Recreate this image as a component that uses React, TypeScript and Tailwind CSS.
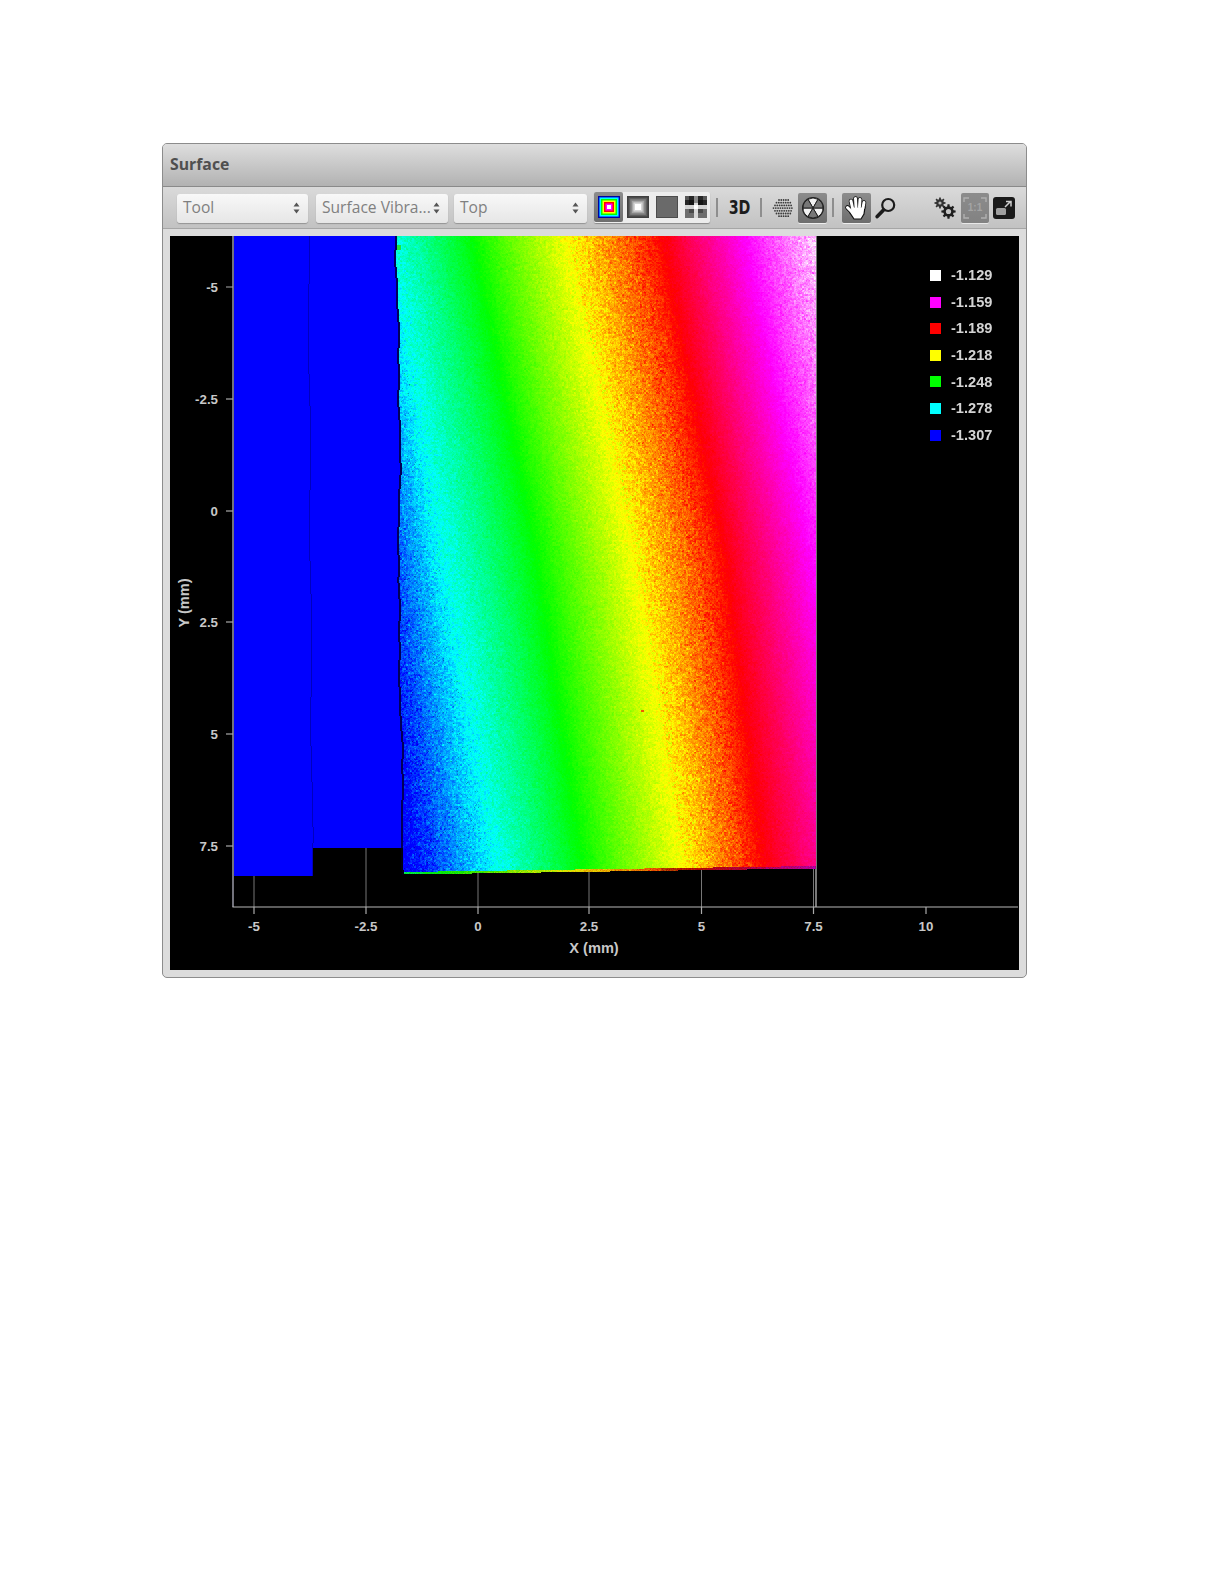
import React, { useEffect, useRef } from "react";

const OX = 170;
const OY = 237;
const PW = 849;
const PH = 734;

function leftEdge(y: number) {
  return (
    398 +
    ((y - 235) / 640) * 5 +
    Math.sin(y / 23) * 0.7 +
    Math.sin(y / 61 + 1) * 1.1 +
    Math.sin(y / 7.3) * 0.4
  );
}

const COLORS: [number, number, number][] = [
  [0, 0, 255],
  [0, 255, 255],
  [0, 255, 0],
  [255, 255, 0],
  [255, 0, 0],
  [255, 0, 255],
  [255, 255, 255],
];

const POS: [number, number, number][] = [
  [325, 375, 412],
  [385, 438, 492],
  [472, 535, 582],
  [568, 635, 685],
  [660, 722, 762],
  [745, 810, 862],
  [835, 900, 955],
];

function colorAt(u: number): [number, number, number] {
  if (u <= 0) return COLORS[0];
  if (u >= 6) return COLORS[6];
  const i = Math.floor(u);
  const f = u - i;
  const a = COLORS[i];
  const b = COLORS[i + 1];
  return [a[0] + (b[0] - a[0]) * f, a[1] + (b[1] - a[1]) * f, a[2] + (b[2] - a[2]) * f];
}

function sigmaAt(u: number) {
  if (u < 1) return 0.16 - u * 0.04;
  if (u < 2) return 0.12 - (u - 1) * 0.09;
  if (u < 3) return 0.03 + (u - 2) * 0.05;
  if (u < 3.7) return 0.14;
  if (u < 4) return 0.14 - (u - 3.7) * 0.3;
  if (u < 5) return 0.04;
  return 0.04 + (u - 5) * 0.16;
}

function Heatmap() {
  const ref = useRef<HTMLCanvasElement>(null);
  useEffect(() => {
    const c = ref.current;
    if (!c) return;
    const ctx = c.getContext("2d");
    if (!ctx) return;
    const img = ctx.createImageData(PW, PH);
    const d = img.data;
    let s = 12345;
    const rnd = () => {
      s = (s + 0x6d2b79f5) | 0;
      let t = Math.imul(s ^ (s >>> 15), 1 | s);
      t = (t + Math.imul(t ^ (t >>> 7), 61 | t)) ^ t;
      return ((t ^ (t >>> 14)) >>> 0) / 4294967296;
    };
    const gauss = () => (rnd() + rnd() + rnd() + rnd() - 2) * 1.7;
    const coarse = new Float32Array(PW * PH);
    for (let i = 0; i < coarse.length; i++) coarse[i] = gauss();
    const put = (x: number, y: number, r: number, g: number, b: number) => {
      const px = x - OX;
      const py = y - OY;
      if (px < 0 || py < 0 || px >= PW || py >= PH) return;
      const i = (py * PW + px) * 4;
      d[i] = r;
      d[i + 1] = g;
      d[i + 2] = b;
      d[i + 3] = 255;
    };
    const uAt = (x: number, p: number) => {
      const row = POS.map((q) =>
        p < 0.5 ? q[0] + (q[1] - q[0]) * (p / 0.5) : q[1] + (q[2] - q[1]) * ((p - 0.5) / 0.5),
      );
      if (x <= row[0]) return (x - row[0]) / 60;
      for (let i = 1; i < row.length; i++) {
        if (x <= row[i]) return i - 1 + (x - row[i - 1]) / (row[i] - row[i - 1]);
      }
      return 6;
    };
    for (let y = OY; y < 880; y++) {
      const le = Math.round(leftEdge(y));
      const seam = Math.round(308 + ((y - 235) / 640) * 4 + Math.sin(y / 31) * 0.8);
      const p = (y - 237) / 633;
      for (let x = 234; x < 816; x++) {
        if (x < le - 2) {
          const slab1 = x < 313;
          const bottom = slab1 ? 877 - (x - 233) * 0.012 : 848;
          if (y > bottom) continue;
          if (x === seam) put(x, y, 0, 0, 190);
          else put(x, y, 0, 0, 255);
        } else if (x < le) {
          if (y < 849 || y > 875) {
            if (y < 849) put(x, y, 0, 0, 90);
            continue;
          }
          put(x, y, 0, 0, 20);
        } else {
          const bot = 875 - ((x - 403) * 6) / 412;
          if (y > bot) continue;
          if (bot - y < 2.5) {
            const u = 1.7 + (x - 403) * 0.0077 + gauss() * 0.12;
            const [r, g, b] = colorAt(u);
            const k = x > 660 ? 0.7 : 0.9;
            put(x, y, r * k, g * k, b * k);
            continue;
          }
          const u0 = uAt(x, p);
          const ix = x - OX;
          const iy = y - OY;
          const n = gauss() * 0.55 + coarse[(iy >> 1) * PW + (ix >> 1)] * 0.75;
          const u = u0 + n * sigmaAt(u0);
          let [r, g, b] = colorAt(u);
          if (u0 < 1 && rnd() < 0.05) {
            const m = rnd() * 0.3;
            r *= 1 - m;
            g *= 1 - m;
            b *= 1 - m;
          }
          put(x, y, r, g, b);
        }
      }
    }
    for (let y = 246; y < 251; y++) for (let x = 397; x < 401; x++) put(x, y, 30, 230, 60);
    for (let y = 711; y < 713; y++) for (let x = 641; x < 644; x++) put(x, y, 240, 90, 0);
    ctx.putImageData(img, 0, 0);
  }, []);
  return <canvas ref={ref} width={PW} height={PH} className="absolute left-0 top-0 blur-[0.35px]" />;
}

const XTICKS: [number, string][] = [
  [254, "-5"],
  [366, "-2.5"],
  [478, "0"],
  [589, "2.5"],
  [701.5, "5"],
  [813.5, "7.5"],
  [926, "10"],
];
const YTICKS: [number, string][] = [
  [288, "-5"],
  [400, "-2.5"],
  [512, "0"],
  [623, "2.5"],
  [735, "5"],
  [847, "7.5"],
];

function Axes() {
  const font = { fontFamily: "'Liberation Sans', Arial, sans-serif", fontWeight: 700, fontSize: 13.3 };
  const big = { ...font, fontSize: 14.6 };
  return (
    <svg width={PW} height={PH} className="absolute left-0 top-0">
      <g transform={`translate(${-OX},${-OY})`}>
        {XTICKS.filter((t) => t[0] < 900).map(([x]) => (
          <line key={x} x1={x} x2={x} y1={237} y2={908} stroke="#777" strokeWidth={1} />
        ))}
        <line x1={816} x2={816} y1={237} y2={908} stroke="#c8c8c8" strokeWidth={1.2} />
        <line x1={233} x2={233} y1={237} y2={908} stroke="#c0c0d0" strokeWidth={1.2} />
        <line x1={232.5} x2={1018} y1={908} y2={908} stroke="#b8b8b8" strokeWidth={1.2} />
        {XTICKS.map(([x, l]) => (
          <g key={l}>
            <line x1={x} x2={x} y1={908} y2={915} stroke="#aaa" strokeWidth={1.2} />
            <text x={x} y={931.5} textAnchor="middle" fill="#c8c8c8" style={font}>
              {l}
            </text>
          </g>
        ))}
        {YTICKS.map(([y, l]) => (
          <g key={l}>
            <line x1={226} x2={233} y1={y} y2={y} stroke="#aaa" strokeWidth={1.2} />
            <text x={218} y={y + 4.5} textAnchor="end" fill="#c8c8c8" style={font}>
              {l}
            </text>
          </g>
        ))}
        <text x={594} y={954} textAnchor="middle" fill="#c8c8c8" style={big}>
          X (mm)
        </text>
        <text
          transform="translate(189,604) rotate(-90)"
          textAnchor="middle"
          fill="#c8c8c8"
          style={big}
        >
          Y (mm)
        </text>
      </g>
    </svg>
  );
}

const LEGEND = [
  ["-1.129", "bg-[#ffffff]"],
  ["-1.159", "bg-[#ff00ff]"],
  ["-1.189", "bg-[#ff0000]"],
  ["-1.218", "bg-[#ffff00]"],
  ["-1.248", "bg-[#00ff00]"],
  ["-1.278", "bg-[#00ffff]"],
  ["-1.307", "bg-[#0000ff]"],
];

function Legend() {
  return (
    <div className="absolute left-[760px] top-[34px] flex flex-col gap-[15.6px]">
      {LEGEND.map(([t, c]) => (
        <div key={t} className="flex h-[11px] items-center gap-[10px]">
          <span className={`h-[11px] w-[11px] ${c}`} />
          <span className="font-['Liberation_Sans',Arial,sans-serif] text-[14.6px] font-bold leading-none text-[#d4d4d4]">
            {t}
          </span>
        </div>
      ))}
    </div>
  );
}

function Select({ label, w, className }: { label: string; w: string; className: string }) {
  return (
    <div
      className={`mt-[1px] flex h-[29px] items-center justify-between rounded-[3px] bg-gradient-to-b from-[#f8f8f8] to-[#e6e6e6] pl-[6px] pr-[8px] shadow-[0_1px_1px_rgba(0,0,0,0.25)] ${w} ${className}`}
    >
      <span className="whitespace-nowrap font-['Open_Sans',sans-serif] text-[15.6px] leading-none text-[#808080]">
        {label}
      </span>
      <svg width="7" height="12" viewBox="0 0 7 12" className="shrink-0">
        <path d="M3.5 0.5 L6.5 4.5 H0.5 Z M3.5 11.5 L0.5 7.5 H6.5 Z" fill="#555" />
      </svg>
    </div>
  );
}

function Separator({ className }: { className: string }) {
  return <div className={`h-[19px] w-[2px] bg-[#8e8e8e] ${className}`} />;
}

function ActiveBtn({ children, className = "" }: { children: React.ReactNode; className?: string }) {
  return (
    <div
      className={`flex h-[30px] w-[29px] items-center justify-center rounded-[2px] bg-gradient-to-b from-[#8c8c8c] to-[#6e6e6e] shadow-[0_1px_0_#eeeeee] ${className}`}
    >
      {children}
    </div>
  );
}

function RainbowIcon() {
  const cols = ["#0000ff", "#00ffff", "#00ff00", "#ffff00", "#ff0000", "#ff00ff", "#ffffff"];
  return (
    <svg width="22" height="22" viewBox="0 0 22 22">
      {cols.map((c, i) => (
        <rect key={c} x={i * 1.5} y={i * 1.5} width={22 - i * 3} height={22 - i * 3} fill={c} />
      ))}
      <rect x="0.5" y="0.5" width="21" height="21" fill="none" stroke="#0000a0" />
    </svg>
  );
}

function GrayIcon() {
  const cols = ["#3f3f3f", "#5e5e5e", "#808080", "#a6a6a6", "#d6d6d6", "#ffffff"];
  return (
    <svg width="22" height="22" viewBox="0 0 22 22">
      {cols.map((c, i) => (
        <rect key={c} x={i * 1.6} y={i * 1.6} width={22 - i * 3.2} height={22 - i * 3.2} fill={c} />
      ))}
    </svg>
  );
}

function FlatIcon() {
  return (
    <svg width="22" height="22" viewBox="0 0 22 22">
      <rect x="0.5" y="0.5" width="21" height="21" fill="#6a6a6a" stroke="#4c4c4c" />
    </svg>
  );
}

function GridIcon() {
  return (
    <svg width="22" height="22" viewBox="0 0 22 22">
      <rect width="22" height="22" fill="#d8d8d8" />
      <rect x="0" y="0" width="9" height="9" fill="#262626" />
      <rect x="13" y="0" width="9" height="9" fill="#262626" />
      <rect x="0" y="13" width="9" height="9" fill="#6e6e6e" />
      <rect x="13" y="13" width="9" height="9" fill="#6e6e6e" />
      <rect x="0" y="0" width="4" height="4" fill="#555" />
      <rect x="18" y="0" width="4" height="4" fill="#555" />
      <rect x="4" y="4" width="5" height="5" fill="#141414" />
      <rect x="13" y="4" width="5" height="5" fill="#141414" />
      <rect x="4" y="13" width="5" height="4" fill="#4a4a4a" />
      <rect x="13" y="13" width="5" height="4" fill="#4a4a4a" />
      <rect x="9" y="0" width="4" height="7" fill="#8a8a8a" />
      <rect x="0" y="9" width="22" height="4" fill="#cfcfcf" opacity="0.7" />
      <rect x="9" y="9" width="4" height="4" fill="#fff" />
    </svg>
  );
}

function DotsIcon() {
  const rows = [
    [7, 5],
    [4.5, 7],
    [3, 8],
    [1.5, 9],
    [3, 8],
    [4.5, 7],
    [7, 5],
  ];
  return (
    <svg width="22" height="22" viewBox="0 0 22 22">
      {rows.map(([sx, n], r) =>
        Array.from({ length: n }).map((_, i) => (
          <circle key={`${r}-${i}`} cx={sx + i * 2.3} cy={3 + r * 2.7} r={0.9} fill="#3a3a3a" />
        )),
      )}
    </svg>
  );
}

function WheelIcon() {
  const sector = (a: number) => {
    const r = 10;
    const a0 = (a * Math.PI) / 180;
    const a1 = ((a + 60) * Math.PI) / 180;
    return `M12 12 L${12 + r * Math.cos(a0)} ${12 + r * Math.sin(a0)} A${r} ${r} 0 0 1 ${12 + r * Math.cos(a1)} ${12 + r * Math.sin(a1)} Z`;
  };
  return (
    <svg width="24" height="24" viewBox="0 0 24 24">
      <circle cx="12" cy="12" r="11" fill="#222" />
      {[-120, 0, 120].map((a) => (
        <path key={a} d={sector(a)} fill="#f2f2f2" stroke="#222" strokeWidth="1" />
      ))}
      {[-60, 60, 180].map((a) => (
        <path key={a} d={sector(a)} fill="#777" stroke="#222" strokeWidth="1" />
      ))}
    </svg>
  );
}

function HandIcon() {
  const fingers = ["M7.5 13 L6 6", "M11 12 L10.5 3.5", "M14.5 12 L15 4.5", "M18 13 L19 7.5"];
  return (
    <svg width="26" height="26" viewBox="0 0 24 26">
      <g strokeLinecap="round" fill="none">
        {fingers.map((d) => (
          <path key={d} d={d} stroke="#111" strokeWidth="4.6" />
        ))}
        <path d="M7 17 L2.5 12.5" stroke="#111" strokeWidth="4.6" />
      </g>
      <path d="M6 12 H20 L19 19 L16 24 H9 L5 18 Z" fill="#fff" stroke="#111" strokeWidth="1.2" />
      <g strokeLinecap="round" fill="none" stroke="#fff" strokeWidth="3">
        {fingers.map((d) => (
          <path key={d} d={d} />
        ))}
        <path d="M7 17 L2.5 12.5" />
      </g>
    </svg>
  );
}

function MagnifierIcon({ className }: { className: string }) {
  return (
    <svg width="21" height="22" viewBox="0 0 21 22" className={className}>
      <circle cx="13.2" cy="8" r="6" fill="none" stroke="#1c1c1c" strokeWidth="2.2" />
      <path d="M8.5 13 L2.2 19.6" stroke="#1c1c1c" strokeWidth="3.6" strokeLinecap="round" />
    </svg>
  );
}

function gearPath(cx: number, cy: number, ro: number, ri: number, n: number) {
  const pts: string[] = [];
  for (let i = 0; i < n; i++) {
    const step = (Math.PI * 2) / n;
    const a = i * step;
    const seq: [number, number][] = [
      [a - step * 0.32, ri],
      [a - step * 0.18, ro],
      [a + step * 0.18, ro],
      [a + step * 0.32, ri],
    ];
    for (const [an, r] of seq) {
      pts.push(`${(cx + r * Math.cos(an)).toFixed(2)} ${(cy + r * Math.sin(an)).toFixed(2)}`);
    }
  }
  return `M${pts.join(" L")} Z`;
}

function GearsIcon({ className }: { className: string }) {
  return (
    <svg width="22" height="22" viewBox="0 0 22 22" className={className}>
      <path d={gearPath(6, 6, 5.6, 3.9, 8)} fill="#333" />
      <circle cx="6" cy="6" r="1.6" fill="#b8b8b8" />
      <path d={gearPath(14.5, 14.5, 7.2, 5.2, 8)} fill="#1f1f1f" />
      <circle cx="14.5" cy="14.5" r="2.6" fill="#c4c4c4" />
    </svg>
  );
}

function FitBtn({ className }: { className: string }) {
  return (
    <div
      className={`relative flex h-[30px] w-[28px] items-center justify-center rounded-[2px] bg-gradient-to-b from-[#8c8c8c] to-[#828282] shadow-[0_1px_0_#e8e8e8] ${className}`}
    >
      <svg width="24" height="24" viewBox="0 0 24 24" className="absolute left-[2px] top-[3px]">
        <path
          d="M1 6 V2 H6 M18 2 H23 V6 M23 18 V22 H18 M6 22 H1 V18"
          fill="none"
          stroke="#b0b0b0"
          strokeWidth="1.4"
        />
      </svg>
      <span className="font-['Liberation_Sans',sans-serif] text-[10px] font-bold leading-none text-[#a4a4a4]">
        1:1
      </span>
    </div>
  );
}

function ExpandIcon({ className }: { className: string }) {
  return (
    <svg width="22" height="22" viewBox="0 0 22 22" className={className}>
      <rect x="0" y="0" width="22" height="22" rx="3" fill="#1a1a1a" />
      <rect x="3" y="11" width="10" height="7" rx="1.5" fill="#a0a0a0" />
      <path d="M12 10 L17 5 M13 4.5 H18 V9.5" fill="none" stroke="#cfcfcf" strokeWidth="1.5" />
    </svg>
  );
}

export default function App() {
  return (
    <div className="h-[1584px] w-[1224px] bg-white pl-[162px] pt-[143px]">
      <div className="flex h-[835px] w-[865px] flex-col overflow-hidden rounded-[5px] border border-[#8c8c8c] bg-[#dcdcdc] blur-[0.5px]">
        <div className="flex h-[43px] shrink-0 items-center border-b border-[#8a8a8a] bg-gradient-to-b from-[#dedede] to-[#b2b2b2] pb-[1px] pl-[7px]">
          <span className="font-['Open_Sans',sans-serif] text-[15.8px] font-bold leading-none text-[#4f4f4f]">
            Surface
          </span>
        </div>
        <div className="flex h-[42px] shrink-0 items-center border-b border-[#a6a6a6] bg-gradient-to-b from-[#dadada] to-[#c2c2c2] pl-[14px]">
          <Select label="Tool" w="w-[131px]" className="" />
          <Select label="Surface Vibra..." w="w-[132px]" className="ml-[8px]" />
          <Select label="Top" w="w-[133px]" className="ml-[6px]" />
          <div className="ml-[7px] flex h-[31px] w-[116px] rounded-[2px] bg-[#ececec] shadow-[0_1px_1px_rgba(0,0,0,0.3)]">
            <ActiveBtn>
              <RainbowIcon />
            </ActiveBtn>
            <div className="flex h-[30px] w-[29px] items-center justify-center">
              <GrayIcon />
            </div>
            <div className="flex h-[30px] w-[29px] items-center justify-center">
              <FlatIcon />
            </div>
            <div className="flex h-[30px] w-[29px] items-center justify-center">
              <GridIcon />
            </div>
          </div>
          <Separator className="ml-[6px]" />
          <div className="ml-[7px] flex w-[28px] justify-center">
            <span className="origin-center scale-x-75 font-['DejaVu_Sans',sans-serif] text-[19px] font-bold leading-none text-[#1c1c1c]">
              3D
            </span>
          </div>
          <Separator className="ml-[7px]" />
          <div className="ml-[10px] w-[22px]">
            <DotsIcon />
          </div>
          <ActiveBtn className="ml-[4px]">
            <WheelIcon />
          </ActiveBtn>
          <Separator className="ml-[5px]" />
          <ActiveBtn className="ml-[8px]">
            <HandIcon />
          </ActiveBtn>
          <MagnifierIcon className="ml-[4px]" />
          <GearsIcon className="ml-[38px]" />
          <FitBtn className="ml-[5px]" />
          <ExpandIcon className="ml-[4px]" />
        </div>
        <div className="flex-1 px-[7px] pt-[7px]">
          <div className="relative h-[734px] w-[849px] bg-black">
            <Axes />
            <Heatmap />
            <Legend />
          </div>
        </div>
      </div>
    </div>
  );
}
